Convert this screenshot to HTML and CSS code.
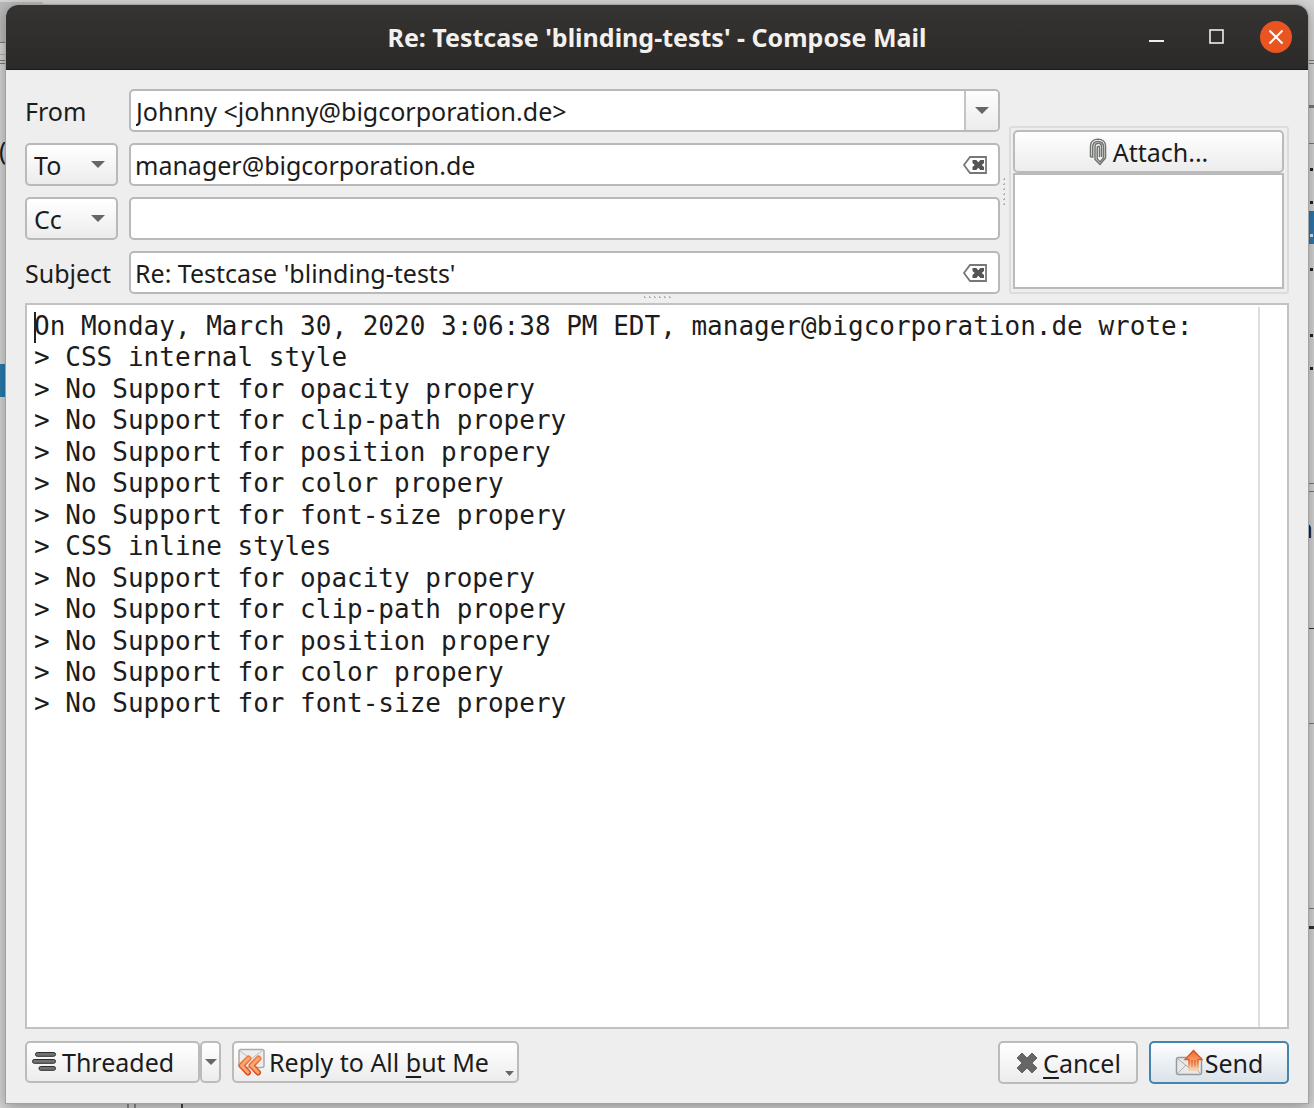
FILE: index.html
```html
<!DOCTYPE html>
<html lang="en">
<head>
<meta charset="utf-8">
<title>Re: Testcase 'blinding-tests' - Compose Mail</title>
<link rel="stylesheet" href="styles.css">
</head>
<body>
<div class="desktop" aria-hidden="true">
  <span class="tab"></span>
  <span class="rule left" style="top:42px"></span>
  <span class="rule left light" style="top:54px"></span>
  <span class="rule left" style="top:60px"></span>
  <span class="rule left" style="top:63px"></span>
  <span class="glyph left" style="top:134px">(</span>
  <span class="row left" style="top:364px"></span>
  <span class="rule" style="top:60px"></span>
  <span class="rule" style="top:63px"></span>
  <span class="rule thick" style="top:105px"></span>
  <span class="rule" style="top:143px"></span>
  <span class="row" style="top:211px"></span>
  <span class="dot" style="top:168px"></span>
  <span class="dot" style="top:201px"></span>
  <span class="dot pale" style="top:234px"></span>
  <span class="dot" style="top:268px"></span>
  <span class="dot" style="top:334px"></span>
  <span class="dot" style="top:367px"></span>
  <span class="rule" style="top:483px"></span>
  <span class="rule" style="top:491px"></span>
  <span class="glyph" style="top:512px">n</span>
  <span class="rule dark" style="top:628px"></span>
  <span class="rule" style="top:723px"></span>
  <span class="rule" style="top:908px"></span>
  <span class="rule thick dark" style="top:926px"></span>
  <span class="divider" style="left:127px"></span>
  <span class="divider" style="left:134px"></span>
  <span class="divider dark" style="left:181px"></span>
</div>

<main class="window">
  <header class="titlebar">
    <h1 class="title">Re: Testcase 'blinding-tests' - Compose Mail</h1>
    <div class="controls">
      <button class="control" type="button" aria-label="Minimize"><svg width="16" height="16" viewBox="0 0 16 16"><path d="M1 12h15" stroke="#eee" stroke-width="2"/></svg></button>
      <button class="control" type="button" aria-label="Maximize"><svg width="16" height="16" viewBox="0 0 16 16"><rect x="2" y="1" width="13" height="13" fill="none" stroke="#eee" stroke-width="1.600"/></svg></button>
      <button class="control close" type="button" aria-label="Close"><svg width="16" height="16" viewBox="0 0 16 16"><path d="M1.500 1.500l13 13m0-13l-13 13" stroke="#fff" stroke-width="2"/></svg></button>
    </div>
  </header>

  <form class="compose">
    <div class="head">
      <div class="fields">
        <label for="from">From</label>
        <div class="field combo">
          <select id="from" class="from"><option>Johnny &lt;johnny@bigcorporation.de&gt;</option></select>
          <span class="drop"><svg width="14" height="8" viewBox="0 0 14 8"><path d="M0 0h14L7 7z" fill="#666"/></svg></span>
        </div>

        <div class="field kind">
          <select aria-label="Recipient type"><option>To</option><option>Cc</option></select>
          <svg class="arrow" width="14" height="8" viewBox="0 0 14 8"><path d="M0 0h14L7 7z" fill="#666"/></svg>
        </div>
        <div class="field">
          <input type="text" aria-label="To" value="manager@bigcorporation.de">
          <button class="clear" type="button" aria-label="Clear recipient"><svg width="26" height="20" viewBox="0 0 26 20"><path d="M8 2h16v16H8L2 10z" fill="#fff" stroke="#777" stroke-width="1.800"/><path d="M10.500 5h3.800l2 2.200 2-2.200H22v3l-2.200 2 2.200 2v3h-3.700l-2-2.200-2 2.200h-3.800v-3l2.200-2-2.200-2z" fill="#555"/></svg></button>
        </div>

        <div class="field kind">
          <select aria-label="Second recipient type"><option>Cc</option><option>To</option></select>
          <svg class="arrow" width="14" height="8" viewBox="0 0 14 8"><path d="M0 0h14L7 7z" fill="#666"/></svg>
        </div>
        <div class="field"><input type="text" aria-label="Cc"></div>

        <label for="subject">Subject</label>
        <div class="field">
          <input id="subject" type="text" value="Re: Testcase 'blinding-tests'">
          <button class="clear" type="button" aria-label="Clear subject"><svg width="26" height="20" viewBox="0 0 26 20"><path d="M8 2h16v16H8L2 10z" fill="#fff" stroke="#777" stroke-width="1.800"/><path d="M10.500 5h3.800l2 2.200 2-2.200H22v3l-2.200 2 2.200 2v3h-3.700l-2-2.200-2 2.200h-3.800v-3l2.200-2-2.200-2z" fill="#555"/></svg></button>
        </div>
      </div>
      <div class="grip vertical"></div>
      <section class="attachments" aria-label="Attachments">
        <button class="button attach" type="button">
          <svg width="18" height="28" viewBox="0 0 18 28" fill="none" stroke="#70746d" stroke-width="1.500"><path d="M1.500 19V8c0-4 3-6.700 7.500-6.700S16.500 4 16.500 8v12L11 26.500 6 21.500V9c0-2.500 1.300-3.700 3.200-3.700S12.500 6.500 12.500 9v10"/><path d="M1.500 19h2.200V9c0-3.300 2-5.500 5.400-5.500S14.500 5.700 14.500 9v11L11 24l-2.800-3V10c0-1 .3-1.700 1.200-1.700s1.100.7 1.100 1.700v9"/></svg>
          <span>Attach...</span>
        </button>
        <div class="list"></div>
      </section>
    </div>

    <div class="grip horizontal"></div>

    <div class="editor">
      <span class="caret"></span>
      <textarea aria-label="Message" spellcheck="false" rows="14">On Monday, March 30, 2020 3:06:38 PM EDT, manager@bigcorporation.de wrote:
&gt; CSS internal style
&gt; No Support for opacity propery
&gt; No Support for clip-path propery
&gt; No Support for position propery
&gt; No Support for color propery
&gt; No Support for font-size propery
&gt; CSS inline styles
&gt; No Support for opacity propery
&gt; No Support for clip-path propery
&gt; No Support for position propery
&gt; No Support for color propery
&gt; No Support for font-size propery</textarea>
      <div class="gutter"></div>
    </div>

    <footer class="actions">
      <div class="split">
        <button class="button threaded" type="button">
          <svg width="26" height="22" viewBox="0 0 26 22" fill="#70736f" stroke="#2c2e2c"><rect x="3.500" y="1.500" width="20" height="3.800" rx="1.800"/><rect x="0.500" y="8.500" width="23" height="3.800" rx="1.800"/><rect x="7" y="15.500" width="16.500" height="3.800" rx="1.800"/></svg>
          <span>Threaded</span>
        </button>
        <button class="button more" type="button" aria-label="Threading options"><svg width="12" height="7" viewBox="0 0 14 8"><path d="M0 0h14L7 7z" fill="#666"/></svg></button>
      </div>
      <button class="button reply" type="button">
        <svg width="28" height="28" viewBox="0 0 28 28"><defs><linearGradient id="flame" x2="0" y2="1"><stop offset="0" stop-color="#ee7a40"/><stop offset="1" stop-color="#de4a18"/></linearGradient></defs><rect x="2" y="1.500" width="25" height="18" rx="2" fill="#eceeed" stroke="#aaa" stroke-width="1.500"/><path d="M3 3l11 8L25 3" fill="none" stroke="#bbb"/><g fill="none" stroke-linecap="round" stroke-linejoin="round"><path d="M11.500 10.500L4.500 17.500l6.500 7M21.500 10.500l-7 7 6.500 7" stroke="url(#flame)" stroke-width="6"/><path d="M11.500 10.500L4.500 17.500l6.500 7M21.500 10.500l-7 7 6.500 7" stroke="#f9a873" stroke-width="3"/></g></svg>
        <span>Reply to All <u>b</u>ut Me</span>
        <svg class="corner" width="9" height="5" viewBox="0 0 14 8"><path d="M0 0h14L7 8z" fill="#666"/></svg>
      </button>
      <span class="spacer"></span>
      <button class="button dialog" type="button">
        <svg width="24" height="24" viewBox="0 0 24 24"><path d="M7 2l5 5 5-5 5 5-5 5 5 5-5 5-5-5-5 5-5-5 5-5-5-5z" fill="#666" stroke="#666" stroke-width="1" stroke-linejoin="round"/></svg>
        <span><u>C</u>ancel</span>
      </button>
      <button class="button dialog default" type="submit">
        <svg width="28" height="28" viewBox="0 0 28 28"><defs><linearGradient id="rise" x2="0" y2="1"><stop offset="0" stop-color="#f2692c"/><stop offset=".6" stop-color="#f6a56e"/><stop offset="1" stop-color="#f6dfc0"/></linearGradient><linearGradient id="edge" x2="0" y2="1"><stop offset="0" stop-color="#dc4a1a"/><stop offset=".6" stop-color="#e4652c"/><stop offset="1" stop-color="#f0d0b0"/></linearGradient></defs><rect x="1.500" y="8.500" width="25" height="17" rx="2" fill="#e8e8e8" stroke="#999" stroke-width="1.500"/><path d="M3 10l10 8M3 24l8-8M25 24l-7-7" fill="none" stroke="#aaa"/><path d="M18.500 1.500l8.500 9h-4V21h-9V10.500h-4z" fill="url(#rise)" stroke="url(#edge)" stroke-width="1.400"/><path d="M17 11v9M20 11v9" stroke="url(#edge)"/></svg>
        <span>Send</span>
      </button>
    </footer>
  </form>
</main>
</body>
</html>
```
FILE: styles.css
```css
* { box-sizing: border-box; }

body {
  margin: 0;
  min-height: 100vh;
  padding: 5px 6px;
  display: flex;
  position: relative;
  overflow: hidden;
  background: #d2d2d2;
  color: #1c1c1c;
  font-family: "Noto Sans", "Open Sans", sans-serif;
  font-size: 25px;
  line-height: 32px;
}

button, input, select, textarea {
  margin: 0;
  padding: 0;
  border: 0;
  background: none;
  color: inherit;
  font: inherit;
  outline: 0;
}

svg { display: block; flex: none; }

/* Windows that show behind the dialog's edges */
.desktop { position: absolute; inset: 0; overflow: hidden; }
.desktop span { position: absolute; right: 0; }
.desktop .left { left: 0; right: auto; }
.desktop .tab { left: 0; top: 2px; width: 43px; height: 40px; background: #b8b8b8; }
.desktop .rule { width: 8px; height: 1px; background: #777; }
.desktop .light { background: #aaa; }
.desktop .thick { height: 3px; }
.desktop .dark { background: #333; }
.desktop .row { width: 8px; height: 33px; background: #2a78ac; }
.desktop .dot { right: 1px; width: 3px; height: 3px; background: #222; }
.desktop .pale { background: #ddd; }
.desktop .glyph { right: 1px; }
.desktop .glyph.left { left: -1px; }
.desktop .divider { bottom: 0; width: 2px; height: 6px; background: #888; }
.desktop .divider.dark { background: #444; }

.window {
  flex: 1;
  min-width: 0;
  position: relative;
  display: flex;
  flex-direction: column;
  background: #eee;
  border-radius: 12px 12px 0 0;
  box-shadow: 0 0 0 1px #a2a2a2, 0 3px 14px rgba(0, 0, 0, .35);
}

.titlebar {
  display: grid;
  grid-template-columns: 1fr auto 1fr;
  align-items: center;
  height: 65px;
  padding: 0 16px;
  border-bottom: 1px solid #1b1919;
  border-radius: 12px 12px 0 0;
  background: linear-gradient(#353432, #2c2929);
  color: #f3f1ee;
}
.title { grid-column: 2; margin: 0; font-size: 25px; font-weight: 700; line-height: 32px; }
.controls { display: flex; justify-content: flex-end; gap: 28px; }
.control { display: grid; place-items: center; width: 32px; height: 32px; border-radius: 50%; }
.close { background: #e95420; }

.compose { flex: 1; display: flex; flex-direction: column; padding: 19px; }

.head { display: flex; }
.fields {
  flex: 1;
  min-width: 0;
  display: grid;
  grid-template-columns: 93px 1fr;
  grid-auto-rows: 43px;
  gap: 11px;
  align-items: center;
}
.fields label { white-space: nowrap; }

.field {
  display: flex;
  align-items: center;
  height: 43px;
  border: 2px solid #b9b9b9;
  border-radius: 5px;
  background: #fff;
  overflow: hidden;
}
.field input, .field select { flex: 1; min-width: 0; height: 39px; padding: 0 4px; appearance: none; }
.field .from { padding: 0 5px; }
.clear { padding-right: 10px; }

.combo, .kind { position: relative; }
.drop {
  display: grid;
  place-items: center;
  width: 34px;
  height: 39px;
  border-left: 2px solid #c4c4c4;
  background: linear-gradient(#fdfdfd, #ececec);
  pointer-events: none;
}
.kind { background: linear-gradient(#fff, #ececec); }
.kind select { padding: 0 7px; }
.kind .arrow { position: absolute; right: 11px; pointer-events: none; }

.grip.vertical {
  align-self: center;
  width: 9px;
  height: 30px;
  background: radial-gradient(circle, #b0b0b0 1px, transparent 1px) 0 0 / 9px 5px;
}
.grip.horizontal {
  align-self: center;
  width: 30px;
  height: 9px;
  background: radial-gradient(circle, #b0b0b0 1px, transparent 1px) 0 0 / 5px 7px repeat-x;
}

.attachments {
  display: flex;
  flex-direction: column;
  width: 280px;
  margin-top: 37px;
  padding: 2px 3px 2px 2px;
  border: 2px solid #dcdcdc;
  border-radius: 3px;
}
.list { flex: 1; margin-bottom: 1px; border: 2px solid #bababa; background: #fff; }

.button {
  display: flex;
  align-items: center;
  justify-content: center;
  gap: 4px;
  height: 42px;
  border: 2px solid #bbb;
  border-radius: 5px;
  background: linear-gradient(#fff, #ececec);
  white-space: nowrap;
}
.button u { text-decoration-thickness: 2px; text-underline-offset: 4px; }
.button.attach { gap: 6px; height: 43px; }

.editor {
  flex: 1;
  position: relative;
  display: flex;
  border: 2px solid #c2c2c2;
  background: #fff;
}
.editor textarea {
  flex: 1;
  min-width: 0;
  padding: 6px 7px;
  resize: none;
  overflow: hidden;
  font-family: "DejaVu Sans Mono", monospace;
  font-size: 26px;
  line-height: 1.21;
}
.caret { position: absolute; left: 7px; top: 7px; width: 2px; height: 31px; background: #222; }
.gutter { width: 29px; margin-top: 2px; border-left: 2px solid #dedede; }

.actions { display: flex; gap: 11px; margin-top: 12px; }
.split { display: flex; }
.threaded { width: 175px; padding: 0 5px; justify-content: flex-start; }
.more { width: 21px; }
.reply { position: relative; width: 287px; padding: 0 3px; justify-content: flex-start; }
.reply .corner { position: absolute; right: 3px; bottom: 5px; }
.spacer { flex: 1; }
.dialog { width: 140px; height: 43px; }
.default { border-color: #4584ac; background: linear-gradient(#fdfefe, #dae3ea); gap: 2px; }
```
